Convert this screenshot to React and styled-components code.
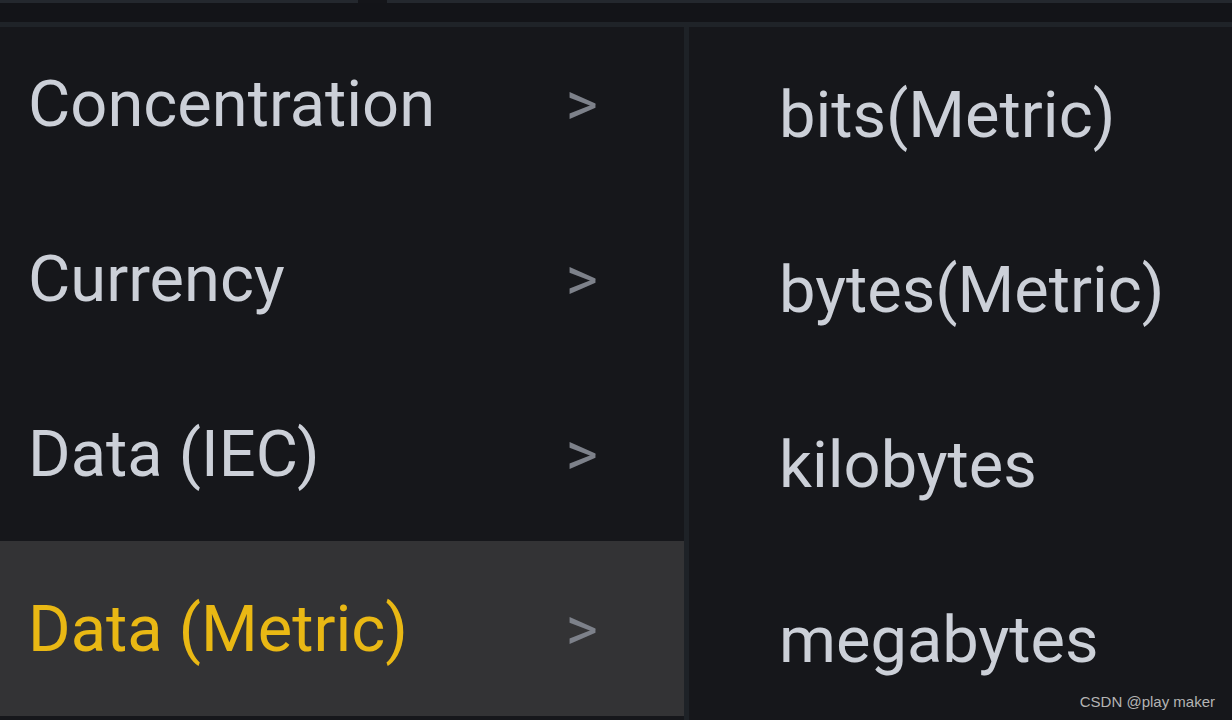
import React from "react";
import styled, { createGlobalStyle } from "styled-components";

const Global = createGlobalStyle`
  html, body {
    margin: 0;
    padding: 0;
    background: #141519;
  }
  #root {
    width: 1232px;
    height: 720px;
    overflow: hidden;
  }
`;

const Page = styled.div`
  position: relative;
  width: 1232px;
  height: 720px;
  display: flex;
  flex-direction: column;
  background: #141519;
  font-family: Roboto, "Noto Sans", sans-serif;
`;

const TopEdge = styled.div`
  display: flex;
  height: 3px;
  gap: 29px;
`;

const EdgePiece = styled.div`
  flex: ${(p) => (p.$grow ? 1 : "none")};
  width: ${(p) => (p.$w ? `${p.$w}px` : "auto")};
  background: #24282e;
`;

const Header = styled.div`
  height: 19px;
  background: #131418;
  border-bottom: 5px solid #1f2328;
`;

const Menu = styled.div`
  flex: 1;
  display: flex;
  overflow: hidden;
`;

const Column = styled.div`
  width: ${(p) => (p.$w ? `${p.$w}px` : "auto")};
  flex: ${(p) => (p.$w ? "none" : 1)};
  display: flex;
  flex-direction: column;
  margin-top: ${(p) => p.$shift || 0}px;
  background: #16171b;
`;

const Divider = styled.div`
  width: 5px;
  background: #1e2227;
`;

const Row = styled.div`
  height: 175px;
  flex: none;
  display: flex;
  align-items: center;
  justify-content: space-between;
  padding: 0 86px 0 28px;
  background: ${(p) => (p.$active ? "#333335" : "transparent")};
  color: ${(p) => (p.$active ? "#e9b814" : "#ccd0d8")};
  font-size: 65px;
`;

const SubRow = styled.div`
  height: 175px;
  flex: none;
  display: flex;
  align-items: center;
  padding-left: 90px;
  color: #ccd0d8;
  font-size: 65px;
`;

const Chevron = styled.span`
  color: #7d818a;
  font-size: 62px;
  line-height: 1;
`;

const Watermark = styled.div`
  position: absolute;
  right: 17px;
  bottom: 10px;
  font-family: "Liberation Sans", Arial, sans-serif;
  font-size: 15px;
  color: #b4b4b4;
`;

const categories = ["Concentration", "Currency", "Data (IEC)", "Data (Metric)"];
const units = ["bits(Metric)", "bytes(Metric)", "kilobytes", "megabytes"];

export default function App() {
  return (
    <Page>
      <Global />
      <TopEdge>
        <EdgePiece $w={358} />
        <EdgePiece $grow />
      </TopEdge>
      <Header />
      <Menu>
        <Column $w={684} $shift={-11}>
          {categories.map((c) => (
            <Row key={c} $active={c === "Data (Metric)"}>
              <span>{c}</span>
              <Chevron>&gt;</Chevron>
            </Row>
          ))}
        </Column>
        <Divider />
        <Column>
          {units.map((u) => (
            <SubRow key={u}>{u}</SubRow>
          ))}
        </Column>
      </Menu>
      <Watermark>CSDN @play maker</Watermark>
    </Page>
  );
}
